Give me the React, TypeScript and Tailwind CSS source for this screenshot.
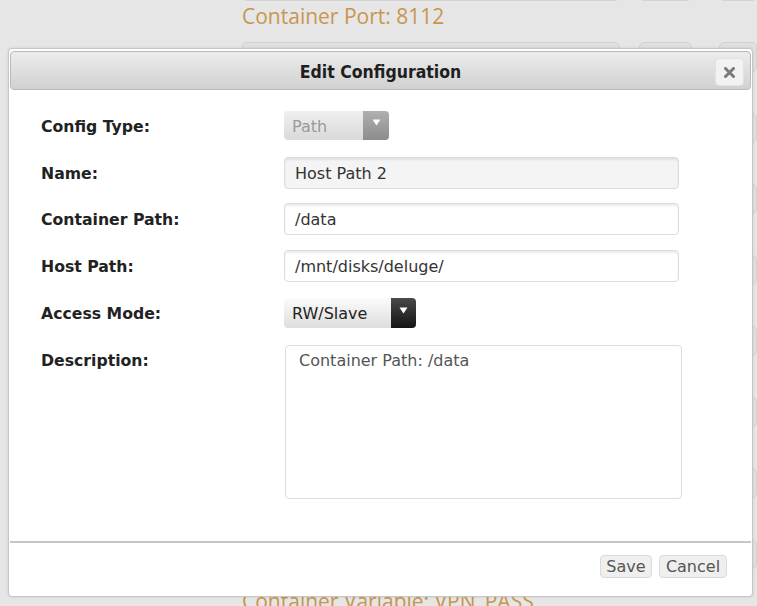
import React from "react";

const dv = "font-['DejaVu_Sans',sans-serif]";

function Field({ label, children, className = "" }: { label: string; children: React.ReactNode; className?: string }) {
  return (
    <div className={`flex items-center ${className}`}>
      <div className={`w-[243px] shrink-0 pt-[2px] text-[15.7px] font-bold text-[#222] ${dv}`}>{label}</div>
      {children}
    </div>
  );
}

function TextInput({ value, readOnly }: { value: string; readOnly?: boolean }) {
  return (
    <div
      className={`w-[395px] h-[32px] flex items-center pl-[10px] pt-[1px] rounded-[4px] border border-[#dcdcdc] shadow-[inset_0_2px_2px_rgba(0,0,0,0.08)] text-[16px] text-[#333] ${dv} ${
        readOnly ? "bg-[#f4f4f4]" : "bg-white"
      }`}
    >
      {value}
    </div>
  );
}

function Caret() {
  return (
    <svg width="9" height="7" viewBox="0 0 9 7">
      <path d="M0.5 0.5 L8.5 0.5 L4.5 6.5 Z" fill="#fff" />
    </svg>
  );
}

function BgRow({ label = "", labelClass = "h-[41px] pt-[1px]" }: { label?: string; labelClass?: string }) {
  return (
    <div className="flex flex-col">
      <div className="flex h-[30px]">
        <div className="w-[394px] rounded-[5px] border border-[#d2d2d2] bg-[#e0e0e0]" />
        <div className="ml-[19px] w-[55px] rounded-[5px] border border-[#d2d2d2] bg-[#e0e0e0]" />
        <div className="ml-[27px] w-[40px] rounded-[5px] border border-[#d2d2d2] bg-[#e0e0e0]" />
      </div>
      <div className={`${labelClass} text-[21px] leading-[28px] text-[#c8964f] font-['Open_Sans',sans-serif]`}>{label}</div>
    </div>
  );
}

export default function App() {
  return (
    <div className="relative w-[757px] h-[606px] overflow-hidden bg-[#e6e6e6]">
      {/* page behind the modal */}
      <div className="flex flex-col pl-[242px] -mt-[29px]">
        <BgRow label="Container Port: 8112" />
        <BgRow />
        <BgRow />
        <BgRow />
        <BgRow />
        <BgRow />
        <BgRow />
        <BgRow />
        <BgRow label="Container Variable: VPN_PASS" labelClass="h-[50px] pt-[18px]" />
      </div>

      {/* modal */}
      <div className="absolute left-[8px] top-[48px] w-[745px] h-[549px] flex flex-col bg-white border border-[#c6c6c6] rounded-[4px] px-[1px] pt-[2px] shadow-[0_0_3px_rgba(0,0,0,0.12)]">
        <div className="relative h-[39px] flex items-center justify-center pt-[3px] rounded-[4px] border border-[#b9b9b9] bg-gradient-to-b from-[#ececec] to-[#d1d1d1]">
          <span className="text-[17.5px] font-bold font-stretch-condensed text-[#1e1e1e] font-['DejaVu_Sans_Condensed','DejaVu_Sans',sans-serif]">
            Edit Configuration
          </span>
          <button className="absolute right-[6px] top-[6px] w-[29px] h-[28px] flex items-center justify-center rounded-[4px] bg-[#f2f2f2] border border-[#e2e2e2]">
            <svg width="11" height="11" viewBox="0 0 11 11">
              <path d="M1.5 1.5 L9.5 9.5 M9.5 1.5 L1.5 9.5" stroke="#7a7a7a" strokeWidth="3" strokeLinecap="round" />
            </svg>
          </button>
        </div>

        <div className="flex flex-col pl-[31px] pt-[20px]">
          <Field label="Config Type:" className="h-[31px]">
            <div className="w-[105px] h-[29px] flex rounded-[4px] overflow-hidden bg-gradient-to-b from-[#f0f0f0] to-[#d9d9d9]">
              <div className={`flex-1 flex items-center pl-[8px] pt-[2px] text-[16px] text-[#9a9a9a] ${dv}`}>Path</div>
              <div className="w-[26px] flex items-start justify-center pt-[8px] bg-gradient-to-b from-[#b0b0b0] to-[#8c8c8c]">
                <Caret />
              </div>
            </div>
          </Field>
          <Field label="Name:" className="h-[32px] mt-[16px]">
            <TextInput value="Host Path 2" readOnly />
          </Field>
          <Field label="Container Path:" className="h-[32px] mt-[14px]">
            <TextInput value="/data" />
          </Field>
          <Field label="Host Path:" className="h-[32px] mt-[15px]">
            <TextInput value="/mnt/disks/deluge/" />
          </Field>
          <Field label="Access Mode:" className="h-[30px] mt-[16px]">
            <div className="w-[132px] h-[30px] flex rounded-[4px] overflow-hidden bg-gradient-to-b from-[#fbfbfb] to-[#dedede]">
              <div className={`flex-1 flex items-center pl-[8px] pt-[2px] text-[16px] text-[#222] ${dv}`}>RW/Slave</div>
              <div className="w-[25px] flex items-start justify-center pt-[9px] bg-gradient-to-b from-[#4a4a4a] to-[#151515]">
                <Caret />
              </div>
            </div>
          </Field>
          <div className="flex mt-[17px]">
            <div className={`w-[244px] shrink-0 pt-[7px] leading-[18px] text-[15.7px] font-bold text-[#222] ${dv}`}>Description:</div>
            <div className={`w-[397px] h-[154px] rounded-[4px] border border-[#dcdcdc] bg-white pl-[13px] pt-[5px] leading-[20px] text-[16px] text-[#555] ${dv}`}>
              Container Path: /data
            </div>
          </div>
        </div>

        <div className="mt-[42px] h-[2px] bg-[#c6c6c6]" />

        <div className="flex justify-end gap-[7px] pr-[24px] mt-[12px]">
          <button className={`w-[52px] h-[23px] flex items-center justify-center rounded-[4px] border border-[#dadada] bg-[#efefef] text-[16px] text-[#555] ${dv}`}>
            Save
          </button>
          <button className={`w-[68px] h-[23px] flex items-center justify-center rounded-[4px] border border-[#dadada] bg-[#efefef] text-[16px] text-[#555] ${dv}`}>
            Cancel
          </button>
        </div>
      </div>
    </div>
  );
}
